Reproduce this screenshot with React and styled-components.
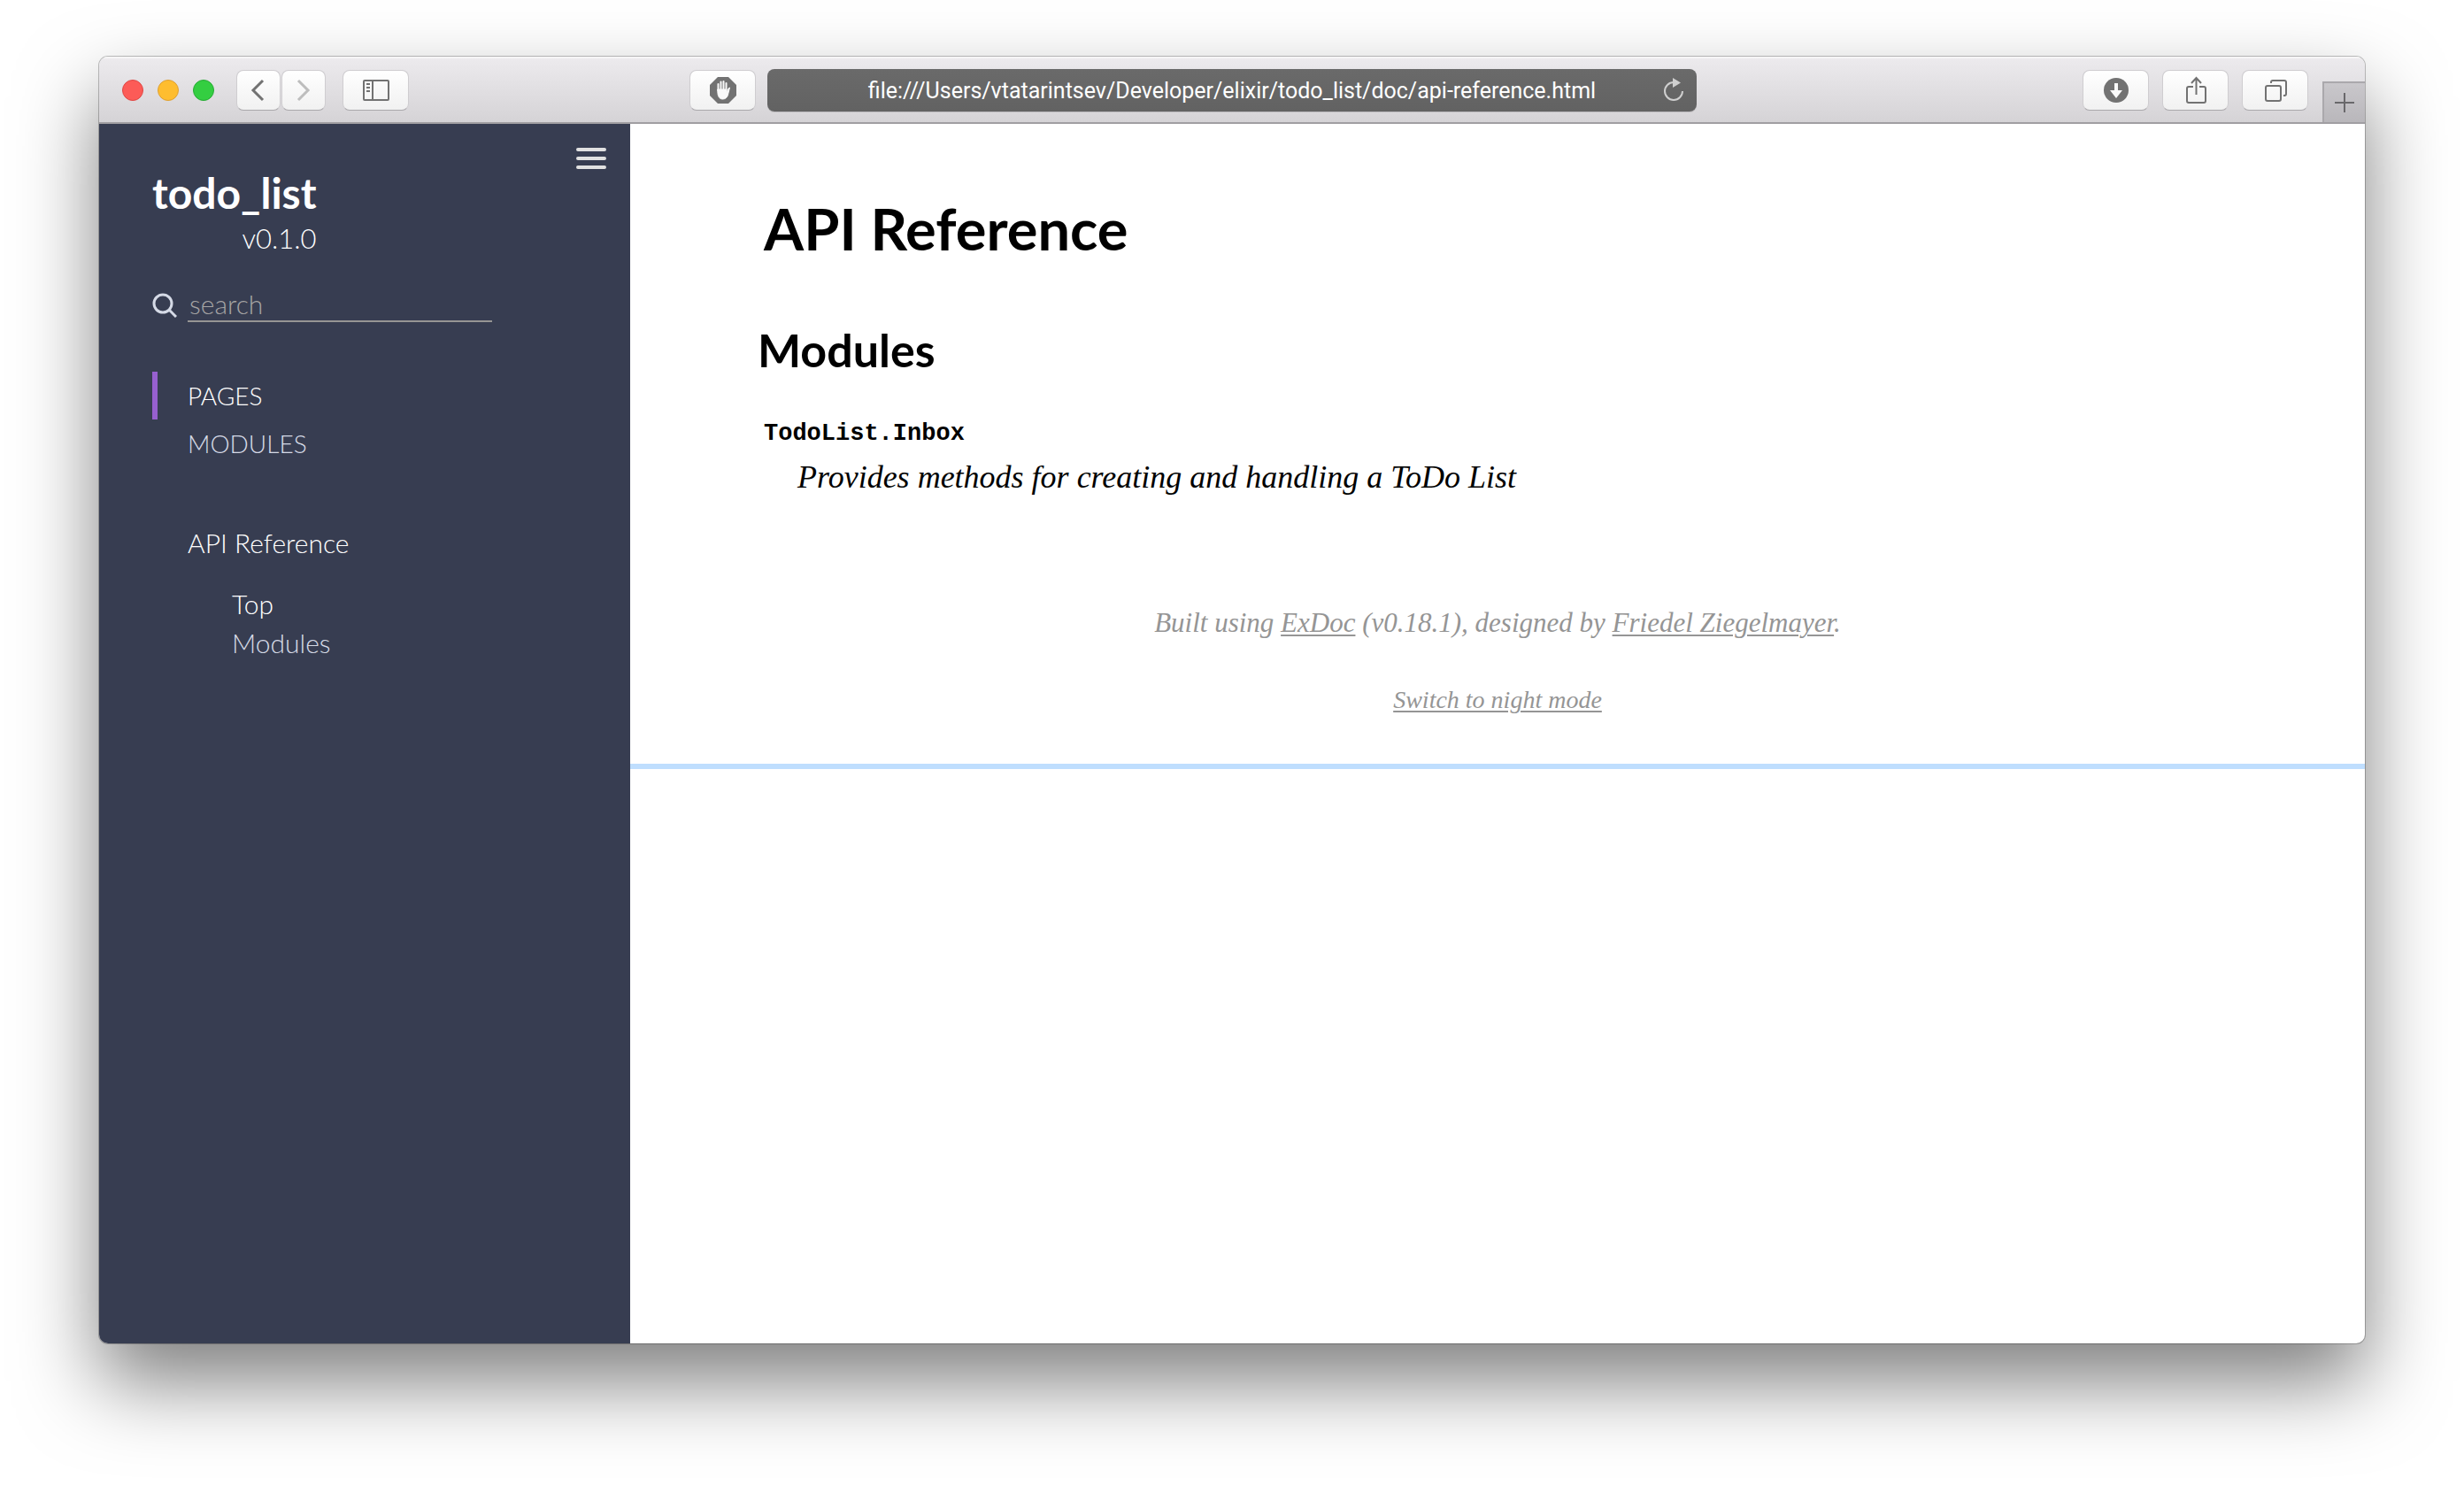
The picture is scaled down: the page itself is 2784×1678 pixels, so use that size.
import React from "react";
import styled, { createGlobalStyle } from "styled-components";

const GlobalStyle = createGlobalStyle`
  *, *::before, *::after { box-sizing: border-box; }
  html, body { margin: 0; background: #fff; }
  button, input { font: inherit; }
  h1, h2, p, ul, dl, dd { margin: 0; padding: 0; }
`;

const lato = `Lato, "Open Sans", sans-serif`;
const serif = `"Liberation Serif", "Times New Roman", serif`;

const Desktop = styled.div`
  display: flex;
  min-height: 100vh;
  padding: 64px 112px 160px;
  overflow: hidden;
`;

const Window = styled.div`
  flex: 1;
  min-width: 0;
  display: flex;
  flex-direction: column;
  overflow: hidden;
  border-radius: 10px;
  background: #fff;
  box-shadow: 0 0 0 1px rgba(0, 0, 0, 0.24), 0 44px 90px rgba(0, 0, 0, 0.5);
`;

/* Browser chrome */

const Toolbar = styled.header`
  display: grid;
  grid-template-columns: minmax(0, 1fr) minmax(0, 1050px) minmax(0, 1fr);
  height: 76px;
  padding-top: 2px;
  border-bottom: 2px solid #a09ea2;
  background: linear-gradient(#edebee, #d5d3d6);
  box-shadow: inset 0 2px 0 #f6f5f6;
`;

const ToolGroup = styled.div`
  display: flex;
  align-items: center;
  justify-content: ${(p) => (p.$end ? "flex-end" : "flex-start")};
  padding: ${(p) => (p.$end ? "0" : "0 13px 0 26px")};
`;

const Lights = styled.div`
  display: flex;
  gap: 16px;
  margin-right: 25px;
`;

const Light = styled.button`
  width: 24px;
  height: 24px;
  padding: 0;
  border: 1px solid ${(p) => p.$edge};
  border-radius: 50%;
  background: ${(p) => p.$fill};
`;

const ToolButton = styled.button`
  display: flex;
  align-items: center;
  justify-content: center;
  flex: none;
  width: ${(p) => (p.$narrow ? "50px" : "75px")};
  height: 46px;
  margin-right: ${(p) => p.$after || "0"};
  margin-left: ${(p) => (p.$push ? "auto" : "0")};
  padding: 0;
  border: 1px solid #cfcdd0;
  border-bottom-color: #aaa8ab;
  border-radius: 8px;
  background: linear-gradient(#fff, #f1f1f1);
  color: ${(p) => (p.$dim ? "#bdbdbd" : "#727272")};
`;

const AddressBar = styled.div`
  display: flex;
  align-items: center;
  align-self: center;
  height: 48px;
  padding: 0 14px 0 38px;
  border-radius: 8px;
  background: linear-gradient(#6a6a6a, #626262);
  box-shadow: 0 1px 0 #bcbabd;
`;

const AddressInput = styled.input`
  flex: 1;
  min-width: 0;
  padding: 2px 0 0;
  border: 0;
  outline: 0;
  background: none;
  color: #fff;
  font: 400 25px/36px Roboto, sans-serif;
  text-align: center;
`;

const ReloadButton = styled.button`
  display: flex;
  padding: 0;
  border: 0;
  background: none;
  color: #cfcfcf;
`;

const NewTab = styled.button`
  display: flex;
  align-items: center;
  justify-content: center;
  align-self: flex-end;
  width: 48px;
  height: 46px;
  padding: 0;
  border: solid #aaa8ac;
  border-width: 2px 0 0 2px;
  background: linear-gradient(#c9c7cb, #b9b7bb);
  color: #69686b;
`;

/* Page */

const Page = styled.div`
  flex: 1;
  display: flex;
  min-height: 0;
`;

const Sidebar = styled.aside`
  flex: none;
  width: 600px;
  padding-left: 60px;
  background: #373d51;
  color: #fff;
  font: 300 30px/54px ${lato};
`;

const MenuRow = styled.div`
  display: flex;
  justify-content: flex-end;
  padding: 26px 27px 0 0;
`;

const MenuButton = styled.button`
  display: flex;
  padding: 0;
  border: 0;
  background: none;
  color: #e1e1e1;
`;

const Project = styled.div`
  width: fit-content;
  text-align: right;
`;

const ProjectName = styled.a`
  display: block;
  color: #fff;
  font-size: 48px;
  font-weight: 700;
  line-height: 52px;
  text-decoration: none;
`;

const Version = styled.div`
  font-size: 31px;
  line-height: 50px;
`;

const SearchForm = styled.form`
  display: flex;
  align-items: center;
  gap: 12px;
  margin-top: 32px;
  color: #d5dae6;
`;

const SearchInput = styled.input`
  width: 344px;
  height: 38px;
  padding: 0 2px 2px;
  border: 0;
  border-bottom: 2px solid #969594;
  border-radius: 0;
  outline: 0;
  background: none;
  color: #fff;
  font-weight: 300;
  line-height: 34px;
  &::placeholder { color: #a5a4a4; opacity: 1; }
`;

const Tabs = styled.ul`
  margin-top: 56px;
  font-size: 28px;
  list-style: none;
`;

const Tab = styled.li`
  padding-left: 34px;
  border-left: 6px solid ${(p) => (p.$active ? "#9760cf" : "transparent")};
`;

const NavLink = styled.a`
  color: ${(p) => (p.$active ? "#fff" : "#d5dae6")};
  text-decoration: none;
  text-transform: ${(p) => (p.$caps ? "uppercase" : "none")};
`;

const Tree = styled.ul`
  margin-top: 58px;
  padding-left: 40px;
  list-style: none;
`;

const SubTree = styled.ul`
  margin-top: 20px;
  padding-left: 50px;
  line-height: 44px;
  list-style: none;
`;

const Content = styled.main`
  flex: 1;
  min-width: 0;
  color: #000;
`;

const Article = styled.article`
  padding: 78px 144px 0;
`;

const Title = styled.h1`
  padding-left: 7px;
  font: 700 65px/80px ${lato};
`;

const Heading = styled.h2`
  margin-top: 65px;
  font: 700 52px/64px ${lato};
`;

const Summary = styled.dl`
  margin-top: 43px;
  padding-left: 7px;
`;

const Term = styled.dt`
  font: 700 27px/40px "Liberation Mono", monospace;
  a { color: inherit; text-decoration: none; }
`;

const Description = styled.dd`
  padding: 4px 0 0 38px;
  font: italic 400 36px/50px ${serif};
`;

const Footer = styled.footer`
  margin-top: 115px;
  padding-bottom: 52px;
  border-bottom: 6px solid #bfdefe;
  color: #959595;
  font: italic 400 31px/50px ${serif};
  text-align: center;
`;

const FooterLink = styled.a`
  color: inherit;
  text-decoration: underline;
  text-decoration-thickness: 2px;
  text-underline-offset: 3px;
`;

const NightButton = styled.button`
  margin-top: 42px;
  padding: 0;
  border: 0;
  background: none;
  color: inherit;
  font-size: 28px;
  line-height: 40px;
  text-decoration: underline;
  text-decoration-thickness: 2px;
  text-underline-offset: 3px;
  display: inline-block;
  vertical-align: top;
`;

const Icon = ({ w, h, sw = 2, children }) => (
  <svg width={w} height={h} viewBox={`0 0 ${w} ${h}`} fill="none" stroke="currentColor" strokeWidth={sw} aria-hidden="true">
    {children}
  </svg>
);

const lights = [
  { label: "Close", fill: "#fc5b57", edge: "#df4744" },
  { label: "Minimize", fill: "#febd2f", edge: "#dea033" },
  { label: "Zoom", fill: "#34ce41", edge: "#27aa35" },
];

export default function App() {
  return (
    <>
      <GlobalStyle />
      <Desktop>
        <Window>
          <Toolbar>
            <ToolGroup>
              <Lights>
                {lights.map((l) => (
                  <Light key={l.label} aria-label={l.label} $fill={l.fill} $edge={l.edge} />
                ))}
              </Lights>
              <ToolButton $narrow $after="1px" aria-label="Back">
                <Icon w={18} h={26} sw={3}><path d="M14 2 3 13l11 11" /></Icon>
              </ToolButton>
              <ToolButton $narrow $dim $after="19px" aria-label="Forward">
                <Icon w={16} h={26} sw={3}><path d="m2 2 11 11L2 24" /></Icon>
              </ToolButton>
              <ToolButton aria-label="Show sidebar">
                <Icon w={30} h={24}>
                  <rect x="1" y="1" width="28" height="22" rx="1" />
                  <path d="M11 1v22M4 5h4M4 9h4M4 13h4" />
                </Icon>
              </ToolButton>
              <ToolButton $push aria-label="Content blocker">
                <Icon w={30} h={30} sw={0}>
                  <path fill="currentColor" d="M9 0h12l9 9v12l-9 9H9l-9-9V9z" />
                  <g stroke="#fafafa" strokeWidth="2" strokeLinecap="round">
                    <path d="M9.500 15V8M12.500 15V5.500M15.500 15V5M18.500 15V7" />
                    <path fill="#fafafa" strokeWidth="1" strokeLinejoin="round" d="M9 14h10v4l2-5 1.500-1-2 8c-.6 3-3 5-6 5S9.600 23 9 19z" />
                  </g>
                </Icon>
              </ToolButton>
            </ToolGroup>
            <AddressBar>
              <AddressInput
                aria-label="Address"
                readOnly
                value="file:///Users/vtatarintsev/Developer/elixir/todo_list/doc/api-reference.html"
              />
              <ReloadButton aria-label="Reload">
                <Icon w={24} h={28}>
                  <path d="M12 5a10 10 0 1 0 10 10" />
                  <path fill="currentColor" stroke="none" d="M11 0v11l9-5.500z" />
                </Icon>
              </ReloadButton>
            </AddressBar>
            <ToolGroup $end>
              <ToolButton $after="15px" aria-label="Downloads">
                <Icon w={28} h={28} sw={0}>
                  <circle cx="14" cy="14" r="14" fill="currentColor" />
                  <path fill="#f9f9f9" d="M12 6h4v8h5l-7 9-7-9h5z" />
                </Icon>
              </ToolButton>
              <ToolButton $after="15px" aria-label="Share">
                <Icon w={24} h={32}>
                  <path d="M9 12H4a2 2 0 0 0-2 2v14a2 2 0 0 0 2 2h17a2 2 0 0 0 2-2V14a2 2 0 0 0-2-2h-5M12.500 21V2M7 8l5.500-6L18 8" />
                </Icon>
              </ToolButton>
              <ToolButton $after="16px" aria-label="Show all tabs">
                <Icon w={26} h={26}>
                  <rect x="2" y="8" width="17" height="17" rx="2" />
                  <path d="M8 5V4a2 2 0 0 1 2-2h13a2 2 0 0 1 2 2v13a2 2 0 0 1-2 2h-1" />
                </Icon>
              </ToolButton>
              <NewTab aria-label="New tab">
                <Icon w={22} h={22}><path d="M11 0v22M0 11h22" /></Icon>
              </NewTab>
            </ToolGroup>
          </Toolbar>

          <Page>
            <Sidebar>
              <MenuRow>
                <MenuButton aria-label="Toggle sidebar">
                  <Icon w={34} h={26} sw={4}>
                    <path strokeLinecap="round" d="M2 3h30M2 13h30M2 23h30" />
                  </Icon>
                </MenuButton>
              </MenuRow>
              <Project>
                <ProjectName href="#top">todo_list</ProjectName>
                <Version>v0.1.0</Version>
              </Project>
              <SearchForm role="search" onSubmit={(e) => e.preventDefault()}>
                <Icon w={28} h={28} sw={3}>
                  <circle cx="12" cy="12" r="10" />
                  <path d="m19 19 8 8" />
                </Icon>
                <SearchInput type="text" placeholder="search" aria-label="search" />
              </SearchForm>
              <nav>
                <Tabs>
                  <Tab $active><NavLink $active $caps href="#pages">Pages</NavLink></Tab>
                  <Tab><NavLink $caps href="#modules-list">Modules</NavLink></Tab>
                </Tabs>
                <Tree>
                  <li>
                    <NavLink $active href="#content">API Reference</NavLink>
                    <SubTree>
                      <li><NavLink $active href="#content">Top</NavLink></li>
                      <li><NavLink href="#modules">Modules</NavLink></li>
                    </SubTree>
                  </li>
                </Tree>
              </nav>
            </Sidebar>
            <Content id="content">
              <Article>
                <Title>API Reference</Title>
                <Heading id="modules">Modules</Heading>
                <Summary>
                  <Term><a href="#inbox">TodoList.Inbox</a></Term>
                  <Description>Provides methods for creating and handling a ToDo List</Description>
                </Summary>
              </Article>
              <Footer>
                <p>
                  Built using <FooterLink href="#exdoc">ExDoc</FooterLink> (v0.18.1), designed by{" "}
                  <FooterLink href="#designer">Friedel Ziegelmayer</FooterLink>.
                </p>
                <NightButton>Switch to night mode</NightButton>
              </Footer>
            </Content>
          </Page>
        </Window>
      </Desktop>
    </>
  );
}
